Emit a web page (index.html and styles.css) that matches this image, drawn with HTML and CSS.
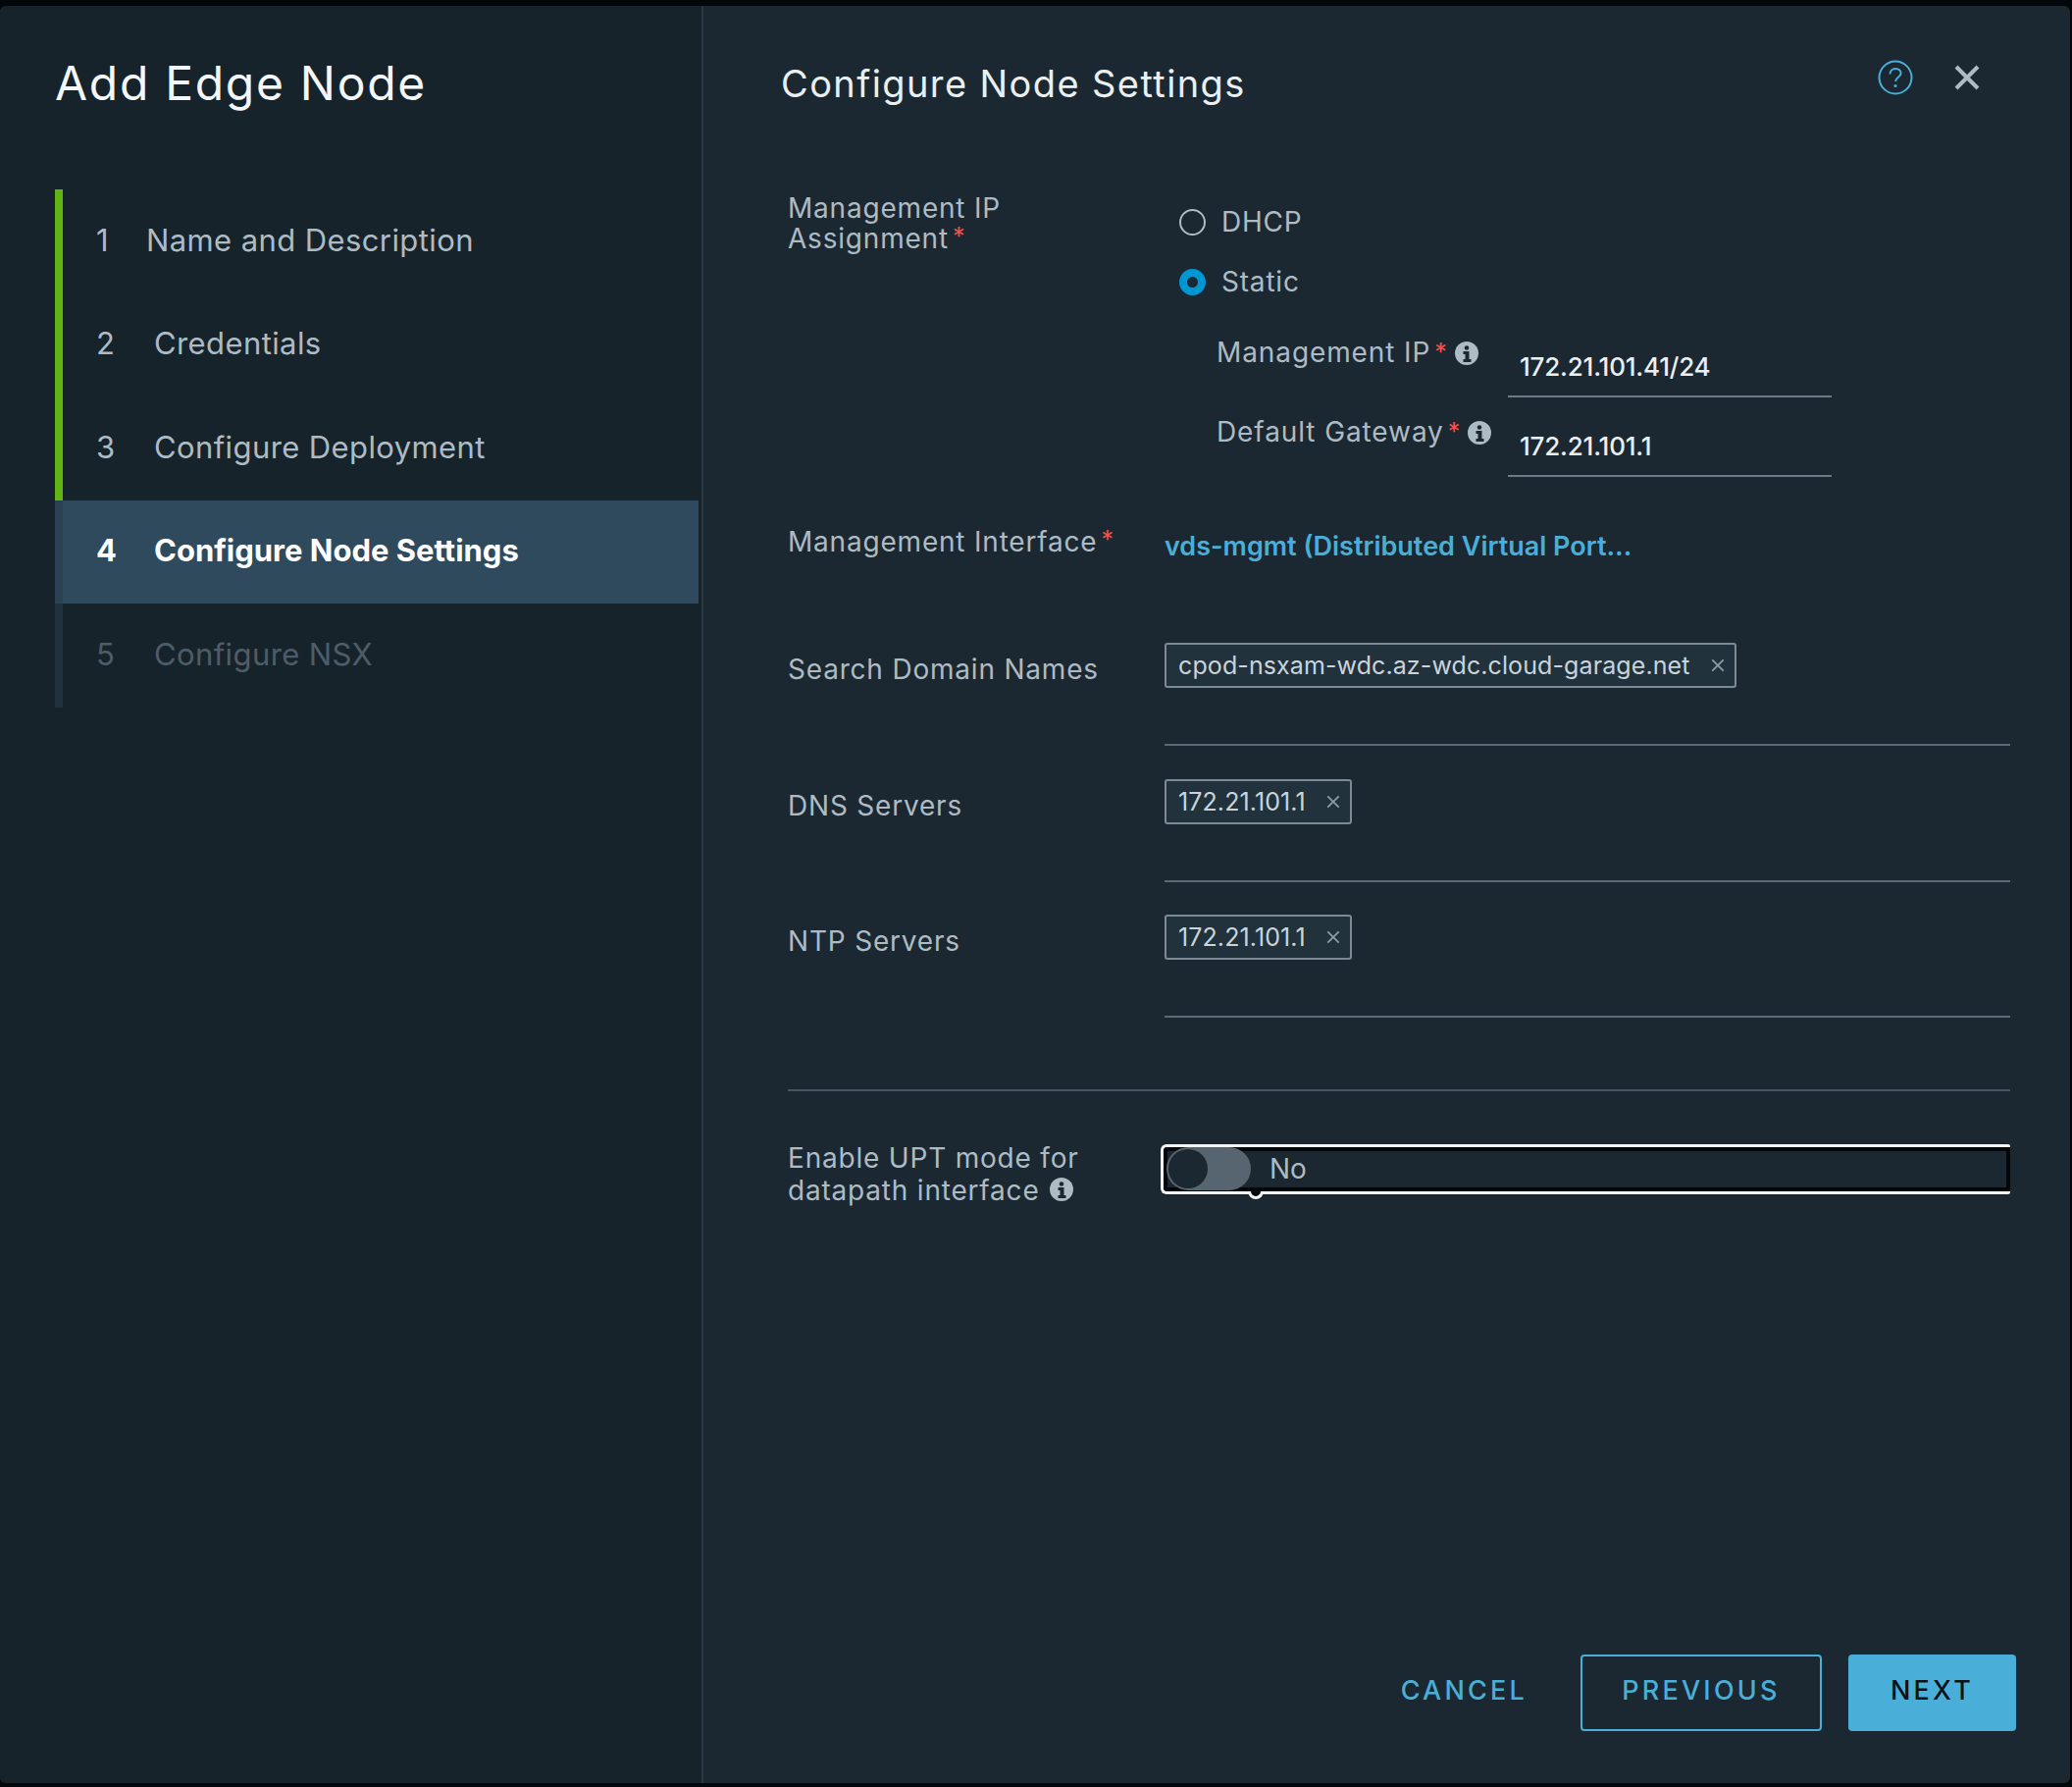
FILE: index.html
```html
<!DOCTYPE html>
<html lang="en">
<head>
<meta charset="utf-8">
<title>Add Edge Node</title>
<link rel="stylesheet" href="styles.css">
</head>
<body>
<div class="modal">
  <aside class="sidebar">
    <h1 class="wizard-title">Add Edge Node</h1>
    <ol class="steps">
      <li class="step done"><span class="num">1</span><span class="name first">Name and Description</span></li>
      <li class="step done"><span class="num">2</span><span class="name">Credentials</span></li>
      <li class="step done"><span class="num">3</span><span class="name">Configure Deployment</span></li>
      <li class="step active"><span class="num">4</span><span class="name">Configure Node Settings</span></li>
      <li class="step todo"><span class="num">5</span><span class="name">Configure NSX</span></li>
    </ol>
  </aside>
  <main class="main">
    <header class="head">
      <h2 class="page-title">Configure Node Settings</h2>
      <div class="head-icons">
        <svg class="help" viewBox="0 0 36 36"><circle cx="18" cy="18" r="16.5"/><path d="M12.5 14.5c0-3.4 2.5-5.5 5.7-5.5 3.1 0 5.4 2 5.4 4.7 0 4-5.5 4.200-5.500 8.300"/><circle class="dot" cx="18" cy="26.500" r="1.600"/></svg>
        <svg class="close" viewBox="0 0 26 26"><path d="M2 2l22 22M24 2L2 24"/></svg>
      </div>
    </header>
    <form class="form">
      <div class="row row-assign">
        <div class="label">Management IP<br>Assignment<span class="req">*</span></div>
        <div class="assign">
          <div class="radio-row"><span class="radio"></span><span class="radio-text">DHCP</span></div>
          <div class="radio-row"><span class="radio on"></span><span class="radio-text">Static</span></div>
          <div class="sub sub-first">
            <div class="sub-label">Management IP<span class="req">*</span><svg class="info" viewBox="0 0 24 24"><circle cx="12" cy="12" r="12"/><circle class="i" cx="12" cy="6.500" r="2.300"/><path class="i" d="M8.500 10h6v8h2v3h-8v-3h2v-5h-2z"/></svg></div>
            <div class="input">172.21.101.41/24</div>
          </div>
          <div class="sub">
            <div class="sub-label">Default Gateway<span class="req">*</span><svg class="info" viewBox="0 0 24 24"><circle cx="12" cy="12" r="12"/><circle class="i" cx="12" cy="6.500" r="2.300"/><path class="i" d="M8.500 10h6v8h2v3h-8v-3h2v-5h-2z"/></svg></div>
            <div class="input">172.21.101.1</div>
          </div>
        </div>
      </div>
      <div class="row row-iface">
        <div class="label">Management Interface<span class="req">*</span></div>
        <div class="iface">vds-mgmt (Distributed Virtual Port...</div>
      </div>
      <div class="row row-chips row-search">
        <div class="label label-chip">Search Domain Names</div>
        <div class="chips"><span class="chip">cpod-nsxam-wdc.az-wdc.cloud-garage.net<svg class="chip-x" viewBox="0 0 14 14"><path d="M2 2l10 10M12 2L2 12"/></svg></span></div>
      </div>
      <div class="row row-chips">
        <div class="label label-chip">DNS Servers</div>
        <div class="chips"><span class="chip">172.21.101.1<svg class="chip-x" viewBox="0 0 14 14"><path d="M2 2l10 10M12 2L2 12"/></svg></span></div>
      </div>
      <div class="row row-chips">
        <div class="label label-chip">NTP Servers</div>
        <div class="chips"><span class="chip">172.21.101.1<svg class="chip-x" viewBox="0 0 14 14"><path d="M2 2l10 10M12 2L2 12"/></svg></span></div>
      </div>
      <hr class="sep">
      <div class="row row-toggle">
        <div class="label label-toggle">Enable UPT mode for<br>datapath interface <svg class="info info-inline" viewBox="0 0 24 24"><circle cx="12" cy="12" r="12"/><circle class="i" cx="12" cy="6.500" r="2.300"/><path class="i" d="M8.500 10h6v8h2v3h-8v-3h2v-5h-2z"/></svg></div>
        <div class="toggle-box"><span class="track"><span class="knob"></span></span><span class="toggle-text">No</span><span class="notch"></span></div>
      </div>
    </form>
    <footer class="foot">
      <button type="button" class="btn btn-link">CANCEL</button>
      <button type="button" class="btn btn-outline">PREVIOUS</button>
      <button type="button" class="btn btn-solid">NEXT</button>
    </footer>
  </main>
</div>
</body>
</html>
```

FILE: styles.css
```css
* { box-sizing: border-box; }
html, body { margin: 0; height: 100%; }
body {
  background: #03070a;
  font-family: Inter, "Noto Sans", sans-serif;
  padding: 6px 2px 4px 0;
  height: 1821px;
  overflow: hidden;
}
.modal {
  display: flex;
  height: 100%;
  border-radius: 6px;
  overflow: hidden;
  background: #1b2831;
}
.sidebar {
  width: 717px;
  flex: none;
  background: #17232b;
  border-right: 2px solid #2a3a45;
  padding: 51px 3px 0 56px;
}
.wizard-title {
  margin: 0;
  font-size: 48px;
  line-height: 56px;
  font-weight: 400;
  letter-spacing: 1.700px;
  color: #f4f7f9;
}
.steps {
  list-style: none;
  margin: 80px 0 0;
  padding: 0;
}
.step {
  height: 105.500px;
  display: flex;
  align-items: center;
  border-left: 8px solid #60b515;
  padding: 0 0 3px 34px;
  font-size: 31px;
  letter-spacing: .4px;
  color: #adbbc4;
}
.num { width: 59px; flex: none; }
.name.first { margin-left: -8px; }
.step.active {
  background: #2f4a5c;
  border-left-color: #2a4253;
  color: #fff;
  font-weight: 700;
  letter-spacing: 0;
}
.step.todo { border-left-color: #20323e; color: #4d5d68; }
.main {
  flex: 1;
  display: flex;
  flex-direction: column;
  padding: 57px 61px 53px 86px;
  min-width: 0;
}
.head {
  display: flex;
  justify-content: space-between;
  height: 44px;
  margin-left: -7px;
}
.page-title {
  margin: 0;
  font-size: 38px;
  line-height: 44px;
  font-weight: 400;
  letter-spacing: 1.400px;
  color: #eaeff2;
}
.head-icons {
  display: flex;
  align-items: center;
  gap: 42px;
  margin-right: 31px;
  height: 31px;
}
.help { width: 36px; height: 36px; fill: none; stroke: #49afd9; stroke-width: 2; }
.help .dot { fill: #49afd9; stroke: none; }
.close { width: 26px; height: 26px; fill: none; stroke: #adbbc4; stroke-width: 4; }
.form { display: flex; flex-direction: column; margin-top: 89px; }
.row { display: grid; grid-template-columns: 384px 1fr; }
.label {
  font-size: 28px;
  line-height: 31px;
  letter-spacing: .8px;
  color: #adbbc4;
}
.row-assign .label { margin-top: 1px; }
.req { color: #f54f47; margin-left: 4px; font-size: 25px; vertical-align: 3px; line-height: 1; }
.radio-row { height: 61px; display: flex; align-items: center; padding-left: 15px; }
.radio {
  width: 27px;
  height: 27px;
  border-radius: 50%;
  border: 2px solid #adbbc4;
}
.radio.on { border: 8px solid #0095d3; background: #1b2831; }
.radio-text { margin: 0 0 2px 16px; font-size: 28px; letter-spacing: .8px; color: #adbbc4; }
.sub { display: flex; height: 81px; padding-left: 53px; }
.sub-first { margin-top: 23px; }
.sub-label { width: 297px; flex: none; font-size: 28px; letter-spacing: .9px; line-height: 31px; margin-top: 3px; color: #adbbc4; white-space: nowrap; display: flex; align-items: center; height: 31px; }
.info { width: 24px; height: 24px; fill: #adbbc4; margin-left: 7px; }
.info .i { fill: #1b2831; }
.info-inline { margin-left: 2px; vertical-align: -1px; }
.input {
  width: 330px;
  height: 64px;
  padding: 16px 12px 0;
  border-bottom: 2px solid #6b7a85;
  font-size: 26px;
  letter-spacing: -.2px;
  font-weight: 500;
  line-height: 33px;
  color: #eaeff2;
}
.row-iface { margin-top: 34px; height: 102px; }
.iface { font-size: 27px; line-height: 36px; margin-top: 2px; font-weight: 600; color: #49afd9; }
.row-chips { height: 105px; margin-bottom: 33.500px; }
.row-search { margin-top: 16px; }
.label-chip { margin-top: 12px; }
.chips { border-bottom: 2px solid #5b6a75; }
.chip {
  display: inline-flex;
  align-items: center;
  height: 46px;
  padding: 0 9px 0 12px;
  border: 2px solid #7b8a95;
  border-radius: 3px;
  background: #22323c;
  font-size: 25px;
  letter-spacing: .1px;
  color: #c9d4db;
}
.chip-x { width: 16px; height: 16px; margin-left: 20px; fill: none; stroke: #8c9aa4; stroke-width: 1.600; }
.sep {
  margin: 39px 0 0;
  height: 2px;
  border: 0;
  background: #46555f;
}
.row-toggle { margin-top: 54px; }
.label-toggle { line-height: 33px; margin-top: -2px; }
.toggle-box {
  position: relative;
  margin-left: -4px;
  height: 51px;
  display: flex;
  align-items: center;
  background: #1b2831;
  border: 3px solid #f2f4f5;
  border-right: 0;
  border-radius: 6px 2px 2px 6px;
  box-shadow: inset 0 0 0 4px #04070a;
  padding-left: 3px;
}
.track {
  width: 86px;
  height: 44px;
  border-radius: 22px;
  background: #56656f;
  padding: 2px;
  display: block;
}
.knob {
  display: block;
  width: 40px;
  height: 40px;
  border-radius: 50%;
  background: #1b2831;
}
.toggle-text { margin-left: 19px; font-size: 28px; color: #adbbc4; }
.notch {
  position: absolute;
  left: 86px;
  top: 45px;
  width: 16px;
  height: 8px;
  background: #04070a;
  border: 3px solid #f2f4f5;
  border-top: 0;
  border-radius: 0 0 8px 8px;
}
.foot {
  margin-top: auto;
  display: flex;
  justify-content: flex-end;
  margin-right: -6px;
  gap: 27px;
}
.btn {
  height: 78px;
  border-radius: 4px;
  font: 500 27px Inter, "Noto Sans", sans-serif;
  letter-spacing: 3.200px;
  padding: 0 0 5px;
  background: none;
  border: 0;
}
.btn-link { color: #49afd9; margin-right: 27px; }
.btn-outline { color: #49afd9; border: 2px solid #49afd9; width: 246px; }
.btn-solid { color: #0b1319; background: #49afd9; width: 171px; }
```
